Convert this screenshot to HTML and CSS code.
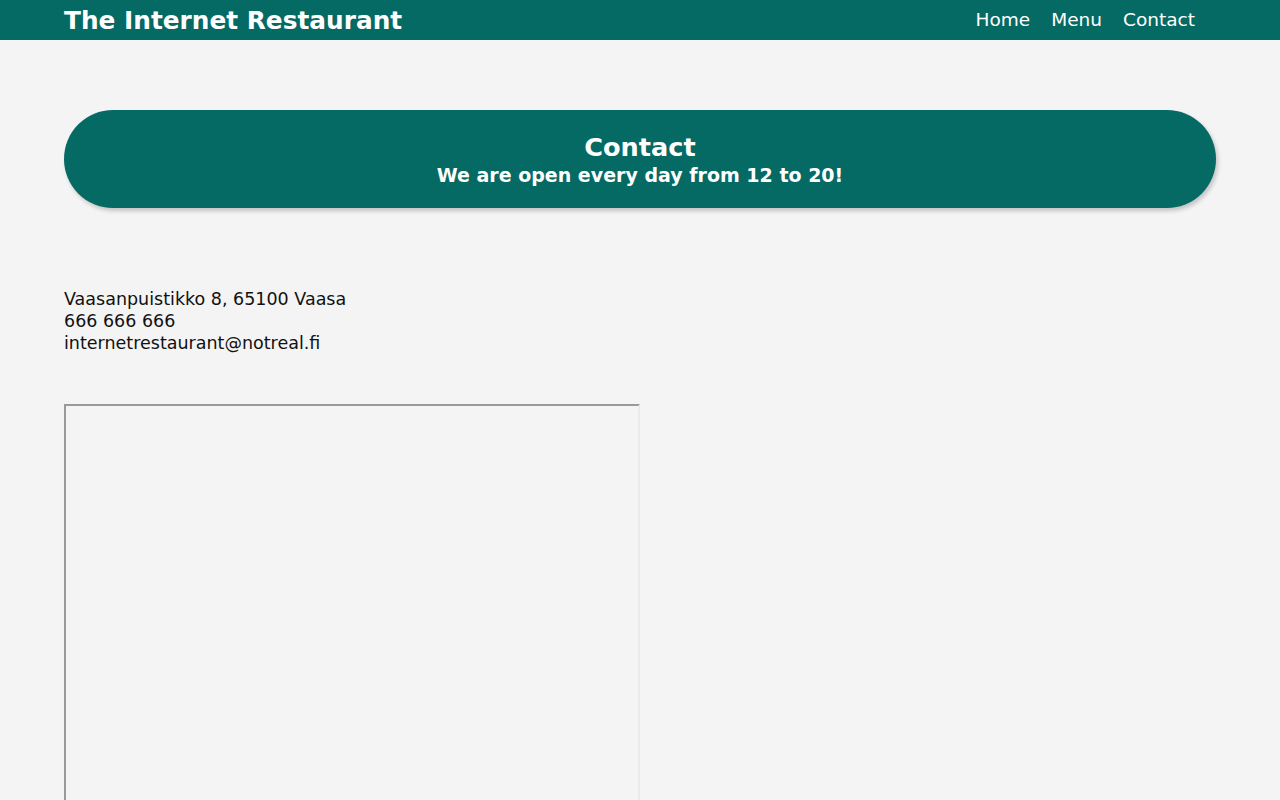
FILE: index.html
```html
<!DOCTYPE html>
<html lang="en">
<head>
<meta charset="utf-8">
<title>Contact - The Internet Restaurant</title>
<link rel="stylesheet" href="styles.css">
</head>
<body>
<header class="site-header">
  <div class="brand">The Internet Restaurant</div>
  <nav class="nav">
    <a class="nav-link" href="#">Home</a>
    <a class="nav-link" href="#">Menu</a>
    <a class="nav-link" href="#">Contact</a>
  </nav>
</header>
<main class="content">
  <section class="hero">
    <h1 class="hero-title">Contact</h1>
    <p class="hero-sub">We are open every day from 12 to 20!</p>
  </section>
  <section class="info">
    <p class="info-line">Vaasanpuistikko 8, 65100 Vaasa</p>
    <p class="info-line">666 666 666</p>
    <p class="info-line">internetrestaurant@notreal.fi</p>
  </section>
  <iframe class="map" title="map"></iframe>
</main>
</body>
</html>
```
FILE: styles.css
```css
html, body {
  margin: 0;
  padding: 0;
}
body {
  background: #f4f4f4;
  font-family: "DejaVu Sans", sans-serif;
  color: #111;
}
.site-header {
  background: #056964;
  height: 40px;
  display: flex;
  align-items: center;
  justify-content: space-between;
  padding: 0 64px;
  color: #fff;
}
.brand {
  font-size: 24.8px;
  font-weight: 700;
}
.nav {
  display: flex;
  gap: 21px;
  padding-right: 21px;
  padding-bottom: 2px;
}
.nav-link {
  color: #fff;
  text-decoration: none;
  font-size: 18.5px;
  font-weight: 400;
}
.content {
  padding: 70px 64px 0;
}
.hero {
  background: #056964;
  color: #fff;
  border-radius: 49px;
  height: 98px;
  box-sizing: border-box;
  padding-top: 1px;
  display: flex;
  flex-direction: column;
  align-items: center;
  justify-content: center;
  box-shadow: 2px 3px 4px rgba(0, 0, 0, 0.2);
}
.hero-title {
  margin: 0;
  font-size: 25.6px;
  font-weight: 700;
  line-height: 30px;
}
.hero-sub {
  margin: 0;
  font-size: 19px;
  font-weight: 700;
  line-height: 26px;
}
.info {
  margin-top: 80px;
}
.info-line {
  margin: 0;
  font-size: 17.5px;
  line-height: 22px;
}
.map {
  display: block;
  margin-top: 50px;
  width: 576px;
  height: 450px;
  border-style: solid;
  border-width: 2px;
  border-top-color: #9a9a9a;
  border-left-color: #9a9a9a;
  border-right-color: #eaeaea;
  border-bottom-color: #eaeaea;
  box-sizing: border-box;
}
```
